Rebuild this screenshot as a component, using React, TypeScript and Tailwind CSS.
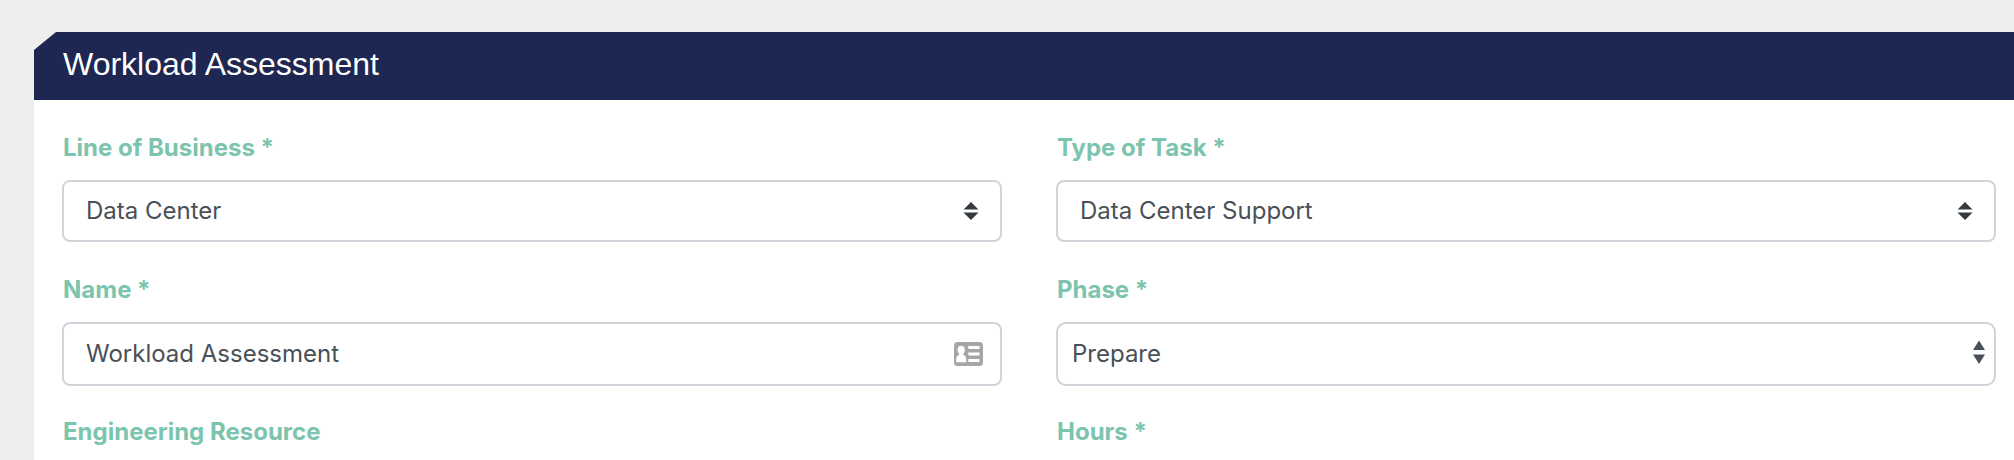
import { useId, type ReactNode } from "react";

const controlBase =
  "block w-full appearance-none border-2 border-[#ced4da] bg-white text-2xl text-[#495057] outline-none focus:border-[#80bdff]";

function Field({ label, children }: { label: string; children: (id: string) => ReactNode }) {
  const id = useId();
  return (
    <div className="min-w-0">
      <label htmlFor={id} className="mb-3.5 block pl-px text-2xl leading-9 font-bold text-[#7cc4ad]">
        {label}
      </label>
      <div className="relative min-h-16">{children(id)}</div>
    </div>
  );
}

function CustomSelect({ id, value }: { id: string; value: string }) {
  return (
    <div className="relative">
      <select id={id} defaultValue={value} className={`${controlBase} h-[62px] rounded-lg pr-14 pl-[22px]`}>
        <option>{value}</option>
      </select>
      <svg
        viewBox="0 0 16 18"
        aria-hidden="true"
        className="pointer-events-none absolute top-[22px] right-[23px] h-[18px] w-4 text-[#343a40]"
      >
        <path d="M8 0L15.5 7.5H0.5ZM8 18L15.5 10.5H0.5Z" fill="currentColor" />
      </svg>
    </div>
  );
}

function PlainSelect({ id, value }: { id: string; value: string }) {
  return (
    <div className="relative">
      <select id={id} defaultValue={value} className={`${controlBase} h-16 rounded-[10px] pr-10 pl-3.5`}>
        <option>{value}</option>
      </select>
      <svg
        viewBox="0 0 12 24"
        aria-hidden="true"
        className="pointer-events-none absolute top-[18px] right-[11px] h-6 w-3 text-[#495057]"
      >
        <path d="M6 0.5L12 10H0ZM6 24L12 14.5H0Z" fill="currentColor" />
      </svg>
    </div>
  );
}

function TextInput({ id, value = "" }: { id: string; value?: string }) {
  return <input id={id} type="text" defaultValue={value} className={`${controlBase} h-16 rounded-lg pr-16 pb-0.5 pl-[22px]`} />;
}

function ContactCardIcon() {
  return (
    <svg
      viewBox="0 0 29 24"
      aria-hidden="true"
      className="pointer-events-none absolute top-5 right-[19px] h-6 w-[29px]"
    >
      <rect width="29" height="24" rx="3.5" fill="#a6a6a6" />
      <g fill="#fff">
        <path d="M7.2 3.8C9.4 3.8 10.8 5.4 10.8 7.7C10.8 9.6 10 10.9 9.2 11.6V12.4C11.2 13.4 12.2 15.3 12.2 17.6V20.2H2.2V17.6C2.2 15.3 3.2 13.4 5.2 12.4V11.6C4.4 10.9 3.6 9.6 3.6 7.7C3.6 5.4 5 3.8 7.2 3.8Z" />
        <path d="M14.3 4H25.5V7H14.3ZM14.3 10.5H25.5V13.5H14.3ZM14.3 17H25.5V20H14.3Z" />
      </g>
    </svg>
  );
}

export default function App() {
  return (
    <main className="h-screen overflow-hidden bg-[#eeeeee] pt-8 pl-[34px] font-['Inter','Liberation_Sans',sans-serif]">
      <section>
        <header className="flex h-[68px] items-center bg-[#1e2751] px-[29px] pb-1 [clip-path:polygon(22px_0,100%_0,100%_100%,0_100%,0_18px)]">
          <h1 className="font-['Liberation_Sans',Arial,sans-serif] text-[32px] leading-10 text-white">
            Workload Assessment
          </h1>
        </header>
        <form className="grid grid-cols-2 gap-x-[54px] gap-y-7 bg-white pt-[30px] pr-[18px] pb-7 pl-7">
          <Field label="Line of Business *">{(id) => <CustomSelect id={id} value="Data Center" />}</Field>
          <Field label="Type of Task *">{(id) => <CustomSelect id={id} value="Data Center Support" />}</Field>
          <Field label="Name *">
            {(id) => (
              <>
                <TextInput id={id} value="Workload Assessment" />
                <ContactCardIcon />
              </>
            )}
          </Field>
          <Field label="Phase *">{(id) => <PlainSelect id={id} value="Prepare" />}</Field>
          <Field label="Engineering Resource">{(id) => <TextInput id={id} />}</Field>
          <Field label="Hours *">{(id) => <TextInput id={id} />}</Field>
        </form>
      </section>
    </main>
  );
}
